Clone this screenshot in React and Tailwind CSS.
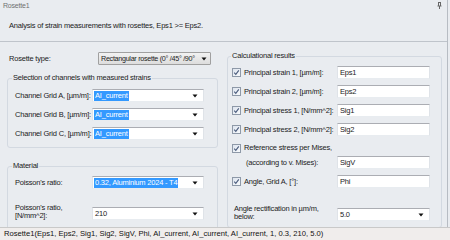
import React from 'react';

const font = { fontFamily: '"Liberation Sans", Arial, sans-serif' };

const Arrow = () => (
  <svg width="6" height="4" viewBox="0 0 6 4" className="shrink-0">
    <path d="M0.5 0.5 H5.5 L3 3.5 Z" fill="#111" />
  </svg>
);

const Check = () => (
  <span className="w-[9px] h-[9px] shrink-0 border border-[#8e99a8] bg-gradient-to-br from-[#dde4ee] to-[#f8fafc] flex items-center justify-center">
    <svg width="7" height="7" viewBox="0 0 7 7">
      <path d="M1.2 3.6 L2.8 5.3 L5.8 1.3" fill="none" stroke="#4a5b7c" strokeWidth="1.1" />
    </svg>
  </span>
);

const Field = ({ value, combo, selected, className = '' }) => (
  <div
    className={`h-[13px] bg-white border border-t-[#abadb3] border-x-[#dfe3e8] border-b-[#e8ecf0] flex items-center pl-[1px] pr-[5px] ${className}`}
  >
    <span className={`leading-[10px] px-[1px] whitespace-nowrap ${selected ? 'bg-[#3399ff] text-white' : ''}`}>{value}</span>
    <span className="flex-1" />
    {combo && <Arrow />}
  </div>
);

const ChannelRow = ({ label }) => (
  <div className="flex items-center h-[13px]">
    <span className="w-[84px] shrink-0 pl-[7px] whitespace-nowrap">{label}</span>
    <Field value="AI_current" combo selected className="w-[112px]" />
  </div>
);

const ResultRow = ({ label, value }) => (
  <div className="flex items-center h-[13px]">
    <div className="w-[109px] shrink-0 flex items-center gap-[3px] pl-[4px] whitespace-nowrap">
      <Check />
      <span>{label}</span>
    </div>
    <Field value={value} className="w-[93px]" />
  </div>
);

export default function App() {
  return (
    <div
      style={font}
      className="w-[450px] h-[240px] overflow-hidden bg-[#e9ecf0] text-[7.5px] tracking-[-0.2px] text-[#1b1b1b] flex flex-col"
    >
      <div className="w-[448px] flex-1 flex flex-col border-r border-[#b7bcc3] min-h-0">
        {/* header */}
        <div className="h-[42px] shrink-0 border-b border-[#bfc4cb] relative">
          <div className="pl-[3px] pt-[1px] leading-[10px] text-[7px] text-[#707070]">Rosette1</div>
          <div className="pl-[9px] pt-[10px] leading-[10px] whitespace-nowrap">
            Analysis of strain measurements with rosettes, Eps1 &gt;= Eps2.
          </div>
          <span className="absolute right-[5px] top-[2px]">
            <svg width="5" height="7" viewBox="0 0 5 7">
              <path d="M1 0.5 H4 M1.5 0.5 V4 M3.5 0.5 V4 M0.5 4 H4.5 M2.5 4 V7" stroke="#666" strokeWidth="1" fill="none" />
            </svg>
          </span>
        </div>

        <div className="flex-1 flex min-h-0">
          {/* left column */}
          <div className="w-[225px] shrink-0 flex flex-col">
            <div className="flex items-center h-[13px] mt-[10px]">
              <span className="w-[98px] pl-[9px] whitespace-nowrap">Rosette type:</span>
              <div className="w-[113px] h-[13px] border border-[#a0a0a0] bg-gradient-to-b from-[#f2f2f2] to-[#dddddd] flex items-center pl-[2px] pr-[3px] gap-[1px] rounded-[1px]">
                <span className="leading-[10px] whitespace-nowrap overflow-hidden flex-1 min-w-0 text-[7.2px] tracking-[-0.3px]">
                  Rectangular rosette (0° /45° /90°
                </span>
                <Arrow />
              </div>
            </div>

            <fieldset className="ml-[7px] w-[211px] mt-[8px] border border-[#d3d9e1] rounded-[3px] pt-[6px] pb-[7px] flex flex-col gap-[6px]">
              <legend className="ml-[4px] px-[1px] leading-[10px] whitespace-nowrap">Selection of channels with measured strains</legend>
              <ChannelRow label="Channel Grid A, [µm/m]:" />
              <ChannelRow label="Channel Grid B, [µm/m]:" />
              <ChannelRow label="Channel Grid C, [µm/m]:" />
            </fieldset>

            <fieldset className="ml-[7px] w-[211px] mt-[13px] border border-[#d3d9e1] rounded-[3px] pt-[5px] pb-[10px] flex flex-col">
              <legend className="ml-[4px] px-[1px] leading-[10px]">Material</legend>
              <div className="flex items-center h-[13px]">
                <span className="w-[84px] pl-[7px] whitespace-nowrap">Poisson's ratio:</span>
                <Field value="0.32, Aluminium 2024 - T4" combo selected className="w-[112px]" />
              </div>
              <div className="flex items-center mt-[14px]">
                <span className="w-[84px] pl-[7px] leading-[8px] whitespace-nowrap">
                  Poisson's ratio,
                  <br />
                  [N/mm^2]:
                </span>
                <Field value="210" combo className="w-[112px] mt-[4px]" />
              </div>
            </fieldset>
          </div>

          {/* right column */}
          <div className="flex-1 flex flex-col">
            <fieldset className="ml-[2px] w-[215px] mt-[9px] border border-[#d3d9e1] rounded-[3px] pt-[5px] pb-[6px] flex flex-col">
              <legend className="ml-[3px] px-[1px] leading-[10px] whitespace-nowrap">Calculational results</legend>
              <div className="flex flex-col gap-[6px]">
                <ResultRow label="Principal strain 1, [µm/m]:" value="Eps1" />
                <ResultRow label="Principal strain 2, [µm/m]:" value="Eps2" />
                <ResultRow label="Principal stress 1, [N/mm^2]:" value="Sig1" />
                <ResultRow label="Principal stress 2, [N/mm^2]:" value="Sig2" />
              </div>
              <div className="flex items-center gap-[3px] pl-[4px] mt-[7px] h-[10px] whitespace-nowrap">
                <Check />
                <span>Reference stress per Mises,</span>
              </div>
              <div className="flex items-center h-[13px] mt-[3px]">
                <span className="w-[109px] pl-[18px] whitespace-nowrap">(according to v. Mises):</span>
                <Field value="SigV" className="w-[93px]" />
              </div>
              <div className="mt-[6px]">
                <ResultRow label="Angle, Grid A, [°]:" value="Phi" />
              </div>
              <div className="flex items-center mt-[17px]">
                <span className="w-[109px] pl-[6px] leading-[8px] whitespace-nowrap">
                  Angle rectification in µm/m,
                  <br />
                  below:
                </span>
                <Field value="5.0" combo className="w-[93px] mt-[3px]" />
              </div>
            </fieldset>
          </div>
        </div>
      </div>

      {/* status bar */}
      <div className="h-[13px] shrink-0 bg-[#f0edec] border-t border-[#c9c9c9] flex items-center pl-[4px] text-[7.6px] tracking-[0px] text-[#111] whitespace-nowrap">
        Rosette1(Eps1, Eps2, Sig1, Sig2, SigV, Phi, AI_current, AI_current, AI_current, 1, 0.3, 210, 5.0)
      </div>
    </div>
  );
}
